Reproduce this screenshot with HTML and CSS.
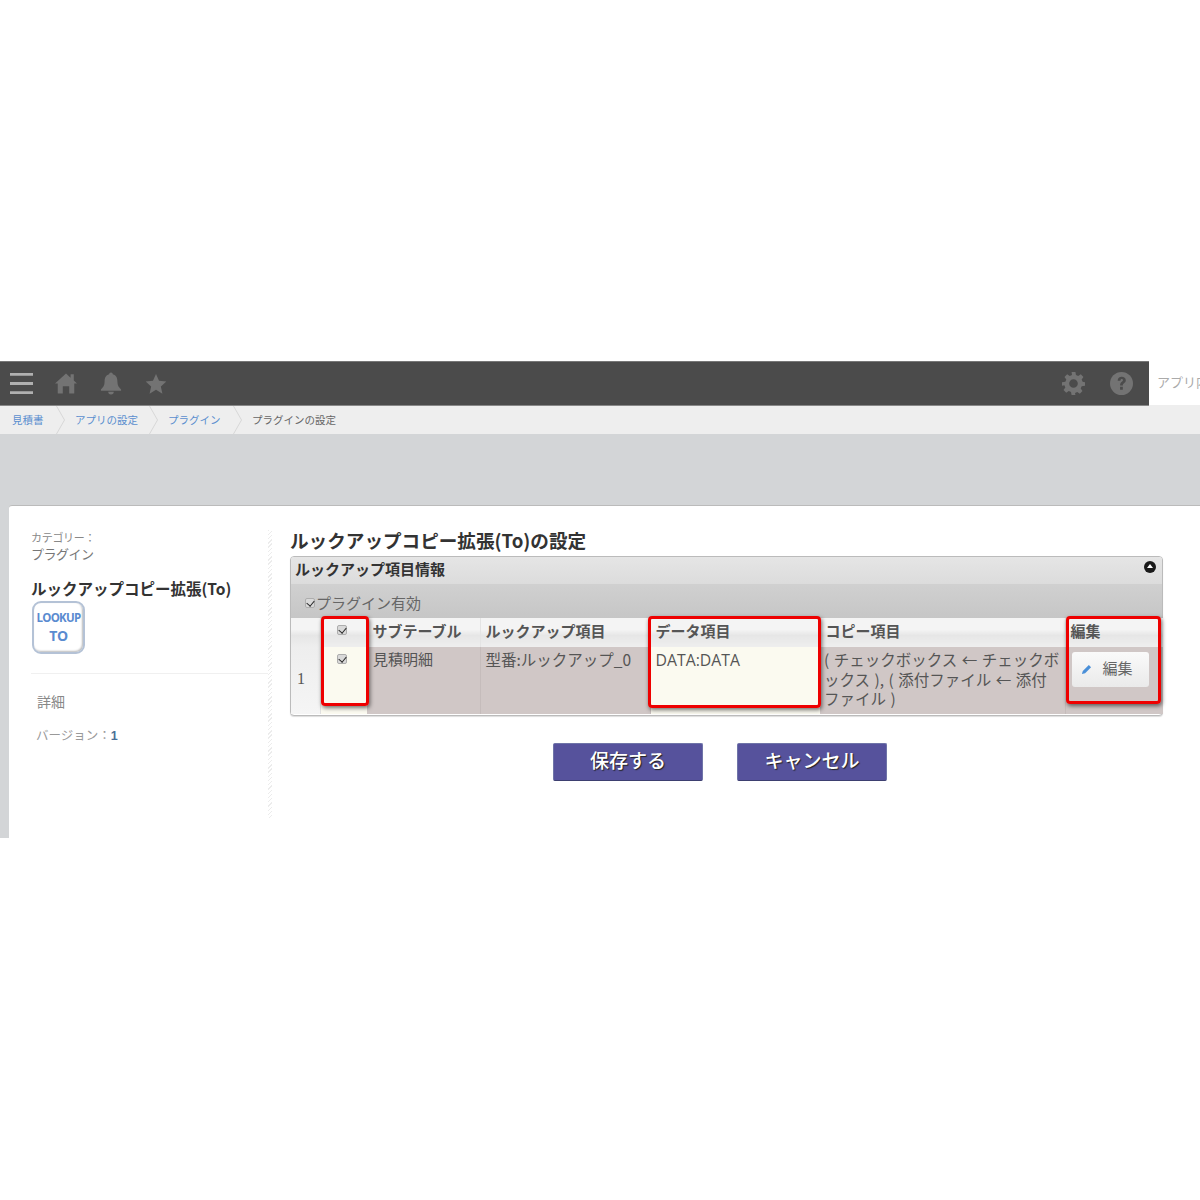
FILE: index.html
```html
<!DOCTYPE html>
<html lang="ja">
<head>
<meta charset="utf-8">
<title>プラグインの設定</title>
<link rel="stylesheet" href="styles.css">
</head>
<body>
<header class="topbar">
  <div class="topbar-main">
    <svg class="icon menu" viewBox="0 0 24 24"><path d="M0 1h24v3H0zM0 10.500h24v3H0zM0 20h24v3H0z"/></svg>
    <svg class="icon home" viewBox="0 0 24 24"><path d="M12 1l5 4.600V2h3.500v6.800L24 12h-3v11h-5.500v-8h-7v8H3V12H0z"/></svg>
    <svg class="icon bell" viewBox="0 0 24 24"><path d="M12 0a2 2 0 0 1 2 2c4 1 5 4.500 5 8 0 4 1.500 6 4 8.500v1.500H1v-1.500C3.500 16 5 14 5 10c0-3.500 1-7 5-8a2 2 0 0 1 2-2zM9 21h6a3 3 0 0 1-6 0z"/></svg>
    <svg class="icon star" viewBox="0 0 24 24"><path d="M12 1l3.300 7.400 8 .8-6 5.400 1.700 7.900-7-4.100-7 4.100 1.700-7.900-6-5.400 8-.8z"/></svg>
    <span class="spacer"></span>
    <svg class="icon gear" viewBox="0 0 24 24"><path fill-rule="evenodd" d="M10 0h4l.6 3.200 2.300 1 2.700-1.900 2.800 2.800-1.900 2.700 1 2.300L24 10.700v3.600l-3.500.6-1 2.300 1.900 2.700-2.800 2.800-2.700-1.900-2.300 1L14 24h-4l-.6-3.200-2.300-1-2.700 1.900-2.800-2.800 1.900-2.700-1-2.300L0 14.300v-3.600l3.500-.6 1-2.300-1.900-2.700 2.800-2.800 2.700 1.900 2.300-1zM12 7.500a4.500 4.500 0 1 0 0 9 4.500 4.500 0 0 0 0-9z"/></svg>
    <svg class="icon help" viewBox="0 0 24 24"><circle cx="12" cy="12" r="12"/><path class="help-mark" d="M8 9c0-2.500 1.800-4 4.200-4S16.500 6.400 16.500 8.700c0 3-3.100 3-3.100 5.300h-2.900c0-3.600 3-3.700 3-5.300 0-.8-.5-1.300-1.300-1.300S11 8 10.900 9zM10.500 15.500h2.900v3h-2.900z"/></svg>
  </div>
  <div class="search">アプリ内を検索</div>
</header>
<nav class="crumbs">
  <a class="crumb first">見積書</a>
  <a class="crumb second">アプリの設定</a>
  <a class="crumb third">プラグイン</a>
  <span class="crumb current">プラグインの設定</span>
</nav>
<div class="stage">
  <main class="card">
    <aside class="side">
      <div class="cat-label">カテゴリー：</div>
      <div class="cat-value">プラグイン</div>
      <h2 class="plugin-name">ルックアップコピー拡張(To)</h2>
      <div class="plugin-logo"><span class="logo-top">LOOKUP</span><span class="logo-bottom">TO</span></div>
      <hr class="side-rule">
      <div class="detail">詳細</div>
      <div class="version">バージョン：<span class="version-num">1</span></div>
    </aside>
    <section class="content">
      <h1 class="page-title">ルックアップコピー拡張(To)の設定</h1>
      <div class="panel">
        <div class="panel-head">
          <span class="panel-title">ルックアップ項目情報</span>
          <span class="collapse"></span>
        </div>
        <label class="enable-row"><input type="checkbox" class="check-small" checked>プラグイン有効</label>
        <table class="grid">
          <colgroup>
            <col class="c-num"><col class="c-check"><col class="c-sub"><col class="c-look"><col class="c-data"><col class="c-copy"><col class="c-edit">
          </colgroup>
          <thead>
            <tr>
              <th></th>
              <th class="cell-center"><input type="checkbox" class="check-small" checked></th>
              <th>サブテーブル</th>
              <th>ルックアップ項目</th>
              <th>データ項目</th>
              <th>コピー項目</th>
              <th>編集</th>
            </tr>
          </thead>
          <tbody>
            <tr>
              <td class="cell-num">1</td>
              <td class="cell-center cell-light"><input type="checkbox" class="check-small" checked></td>
              <td class="cell-sub">見積明細</td>
              <td class="cell-look">型番:ルックアップ_0</td>
              <td class="cell-light cell-data">DATA:DATA</td>
              <td class="cell-copy">( チェックボックス ← チェックボックス ), ( 添付ファイル ← 添付ファイル )</td>
              <td><button class="edit-btn" type="button"><svg class="pencil" viewBox="0 0 12 12"><path d="M8.500 1l2.500 2.500-6.500 6.500L1 11l1-3.500z"/></svg>編集</button></td>
            </tr>
          </tbody>
        </table>
        <span class="mark mark-check"></span>
        <span class="mark mark-data"></span>
        <span class="mark mark-edit"></span>
      </div>
      <div class="actions">
        <button class="action" type="button">保存する</button>
        <button class="action" type="button">キャンセル</button>
      </div>
    </section>
  </main>
</div>
</body>
</html>
```
FILE: styles.css
```css
* { box-sizing: border-box; }
html, body { margin: 0; background: #fff; }
body {
  padding-top: 361px;
  font-family: "Noto Sans CJK JP", "Liberation Sans", sans-serif;
  color: #555;
  overflow-x: hidden;
}
.topbar { display: flex; height: 45px; background: #fff; }
.topbar-main {
  width: 1149px;
  display: flex;
  align-items: center;
  background: #4b4b4b;
  border-top: 1px solid #777;
  border-bottom: 1px solid #888;
  padding: 0 0 0 10px;
}
.icon { fill: #737373; flex: none; display: block; }
.menu { width: 23px; height: 23px; fill: #b0b0b0; margin-right: 22px; }
.home { width: 22px; height: 23px; margin-right: 23px; }
.bell { width: 22px; height: 23px; margin-right: 23px; }
.star { width: 22px; height: 22px; }
.spacer { flex: 1; }
.gear { width: 23px; height: 23px; margin-right: 25px; }
.help { width: 23px; height: 23px; margin-right: 16px; }
.help-mark { fill: #4b4b4b; }
.search {
  flex: 1;
  min-width: 0;
  padding: 12px 0 0 8px;
  font-size: 13px;
  line-height: 18px;
  color: #aaa;
  white-space: nowrap;
  overflow: hidden;
  border-bottom: 1px solid #eee;
}
.crumbs {
  display: flex;
  align-items: center;
  height: 28px;
  background: #eeeeee;
  font-size: 10.500px;
}
.crumb { display: block; line-height: 27px; height: 28px; position: relative; color: #5b8fcf; white-space: nowrap; }
.first { margin-left: 12px; width: 63px; }
.second { width: 93px; }
.third { width: 84px; }
.current { color: #666; }
.first::after, .second::after, .third::after {
  content: "";
  position: absolute;
  top: 0;
  right: 10px;
  width: 9px;
  height: 28px;
  background: #d6d6d6;
  clip-path: polygon(0 0, 1px 0, 9px 50%, 1px 100%, 0 100%, 8px 50%);
}
.stage { background: #d3d5d7; padding: 71px 0 0 9px; }
.card {
  height: 333px;
  background: #fff;
  border-top: 1px solid #bbb;
  border-top-left-radius: 3px;
  display: flex;
  padding: 24px 37px 0 22px;
}
.side {
  width: 241px;
  height: 288px;
  margin-right: 18px;
  flex: none;
  padding-right: 4px;
  background: repeating-linear-gradient(135deg, #ececec 0 1px, #fff 1px 3px) right top / 4px 100% no-repeat;
}
.cat-label { font-size: 11px; line-height: 15px; color: #888; letter-spacing: -0.3px; }
.cat-value { font-size: 13px; line-height: 20px; color: #777; letter-spacing: -0.5px; margin-top: -1px; }
.plugin-name { margin: 14px 0 0; font-size: 15.500px; line-height: 20px; font-weight: 700; color: #333; white-space: nowrap; }
.plugin-logo {
  width: 53px;
  height: 53px;
  margin: 3px 0 0 1px;
  border: 2px solid #b4c2d6;
  border-radius: 9px;
  box-shadow: inset -1px -1px 2px #bbb;
  display: flex;
  flex-direction: column;
  align-items: center;
  font-family: "Open Sans", sans-serif;
  font-weight: 700;
  color: #5a8bd0;
}
.logo-top { font-size: 11.500px; line-height: 14px; margin-top: 8px; letter-spacing: -0.7px; }
.logo-bottom { font-size: 14px; line-height: 18px; margin-top: 2px; letter-spacing: -0.3px; }
.side-rule { border: 0; border-top: 1px solid #f0f0f0; margin: 19px 0 0; }
.detail { margin: 17px 0 0 6px; font-size: 14px; line-height: 20px; color: #888; }
.version { margin: 14px 0 0 5px; font-size: 12.500px; line-height: 20px; color: #999; }
.version-num { color: #4a6f96; font-weight: 700; font-family: "Liberation Sans", sans-serif; }
.content { flex: 1; min-width: 0; }
.page-title { margin: 0 0 6px; font-size: 18.600px; line-height: 20px; font-weight: 700; color: #333; white-space: nowrap; }
.panel {
  position: relative;
  height: 160px;
  border: 1px solid #bbb;
  border-radius: 4px;
  background: #fff;
  box-shadow: 0 1px 1px #ddd;
}
.panel-head {
  height: 28px;
  display: flex;
  align-items: center;
  justify-content: space-between;
  padding: 0 6px 3px 4px;
  background: linear-gradient(#e5e5e5, #dcdcdc);
  border-bottom: 1px solid #d0d0d0;
  border-radius: 3px 3px 0 0;
}
.panel-title { font-size: 15px; font-weight: 700; color: #333; line-height: 22px; }
.collapse {
  width: 12px;
  height: 12px;
  margin-top: -4px;
  border-radius: 50%;
  background: #1a1a1a;
  position: relative;
}
.collapse::after {
  content: "";
  position: absolute;
  left: 3px;
  top: 3px;
  border-left: 3px solid transparent;
  border-right: 3px solid transparent;
  border-bottom: 4px solid #fff;
}
.enable-row {
  height: 33px;
  display: flex;
  align-items: center;
  padding: 3px 0 0 14px;
  background: linear-gradient(#d0d0d0, #c6c6c6);
  font-size: 15px;
  line-height: 20px;
  color: #666;
}
.enable-row .check-small { margin-right: 1px; }
.check-small {
  appearance: none;
  -webkit-appearance: none;
  position: relative;
  width: 10px;
  height: 10px;
  margin: 0;
  display: inline-block;
  flex: none;
  border: 1px solid #adadad;
  border-radius: 2px;
  background: #d9d9d9;
}
.check-small::after {
  content: "";
  position: absolute;
  left: 2px;
  top: 0;
  width: 4px;
  height: 6px;
  border-right: 1.500px solid #2a2a2a;
  border-bottom: 1.500px solid #2a2a2a;
  transform: rotate(40deg);
}
.grid { width: 872px; table-layout: fixed; border-collapse: collapse; }
.c-num { width: 29px; }
.c-check { width: 47px; }
.c-sub { width: 113px; }
.c-look { width: 170px; }
.c-data { width: 170px; }
.c-copy { width: 245px; }
.c-edit { width: 98px; }
.grid th {
  height: 29px;
  padding: 0 5px 4px;
  text-align: left;
  font-size: 15px;
  font-weight: 700;
  color: #555;
  background: linear-gradient(#f4f4f4, #f4f4f4 40%, #e6e6e6 60%, #eeeeee);
  border-right: 1px solid #e4e4e4;
  white-space: nowrap;
}
.grid th:last-child, .grid td:last-child { border-right: 0; }
.grid td {
  height: 67px;
  padding: 3px 5px 0;
  vertical-align: top;
  font-size: 15.500px;
  line-height: 20px;
  color: #555;
  background: #d0c7c6;
  border-right: 1px solid #c5bcbb;
}
.grid .cell-num { background: linear-gradient(#eeeeee, #f5f5f5); font-size: 16px; padding: 0 0 4px 6px; vertical-align: middle; font-family: "Liberation Serif", serif; border-right: 1px solid #e0e0e0; }
.grid .cell-light { background: #fbfaf0; border-right: 0; }
.grid .cell-data { font-family: "Open Sans", sans-serif; font-size: 15.800px; }
.grid .cell-sub { font-size: 15px; padding: 2px 5px 0 6px; }
.grid .cell-look { padding-top: 2px; }
.grid th.cell-center { text-align: center; padding: 0 4px 7px 0; line-height: 10px; }
.grid td.cell-center { text-align: center; padding: 5px 4px 0 0; line-height: 10px; }
.grid .cell-copy { padding: 3px 4px 0; line-height: 19.500px; word-spacing: 1px; }
.edit-btn {
  display: flex;
  align-items: center;
  justify-content: flex-start;
  width: 77px;
  height: 35px;
  margin: 2px 0 0 1px;
  padding: 0 0 4px 9px;
  border: 0;
  border-radius: 3px;
  background: linear-gradient(#fafafa, #eaeaea);
  font: inherit;
  font-size: 15px;
  color: #666;
}
.pencil { width: 11px; height: 11px; fill: #4a8fd8; margin-right: 11px; margin-top: 4px; }
.mark {
  position: absolute;
  border: 3px solid #ee0000;
  border-radius: 4px;
  box-shadow: 1px 2px 4px rgba(0,0,0,.55);
  pointer-events: none;
}
.mark-check { left: 30px; top: 59px; width: 48px; height: 90px; }
.mark-data { left: 357px; top: 59px; width: 173px; height: 92px; }
.mark-edit { left: 775px; top: 59px; width: 95px; height: 88px; }
.actions { display: flex; justify-content: center; gap: 34px; margin: 27px 0 0 -13px; }
.action {
  width: 150px;
  height: 38px;
  border: 1px solid #6f74a8;
  border-bottom-color: #3d3f70;
  border-radius: 2px;
  background: #56529c;
  color: #fff;
  font: inherit;
  font-size: 19px;
  font-weight: 500;
  text-shadow: 1px 1px 1px #222;
  padding: 0 0 5px;
}
```
